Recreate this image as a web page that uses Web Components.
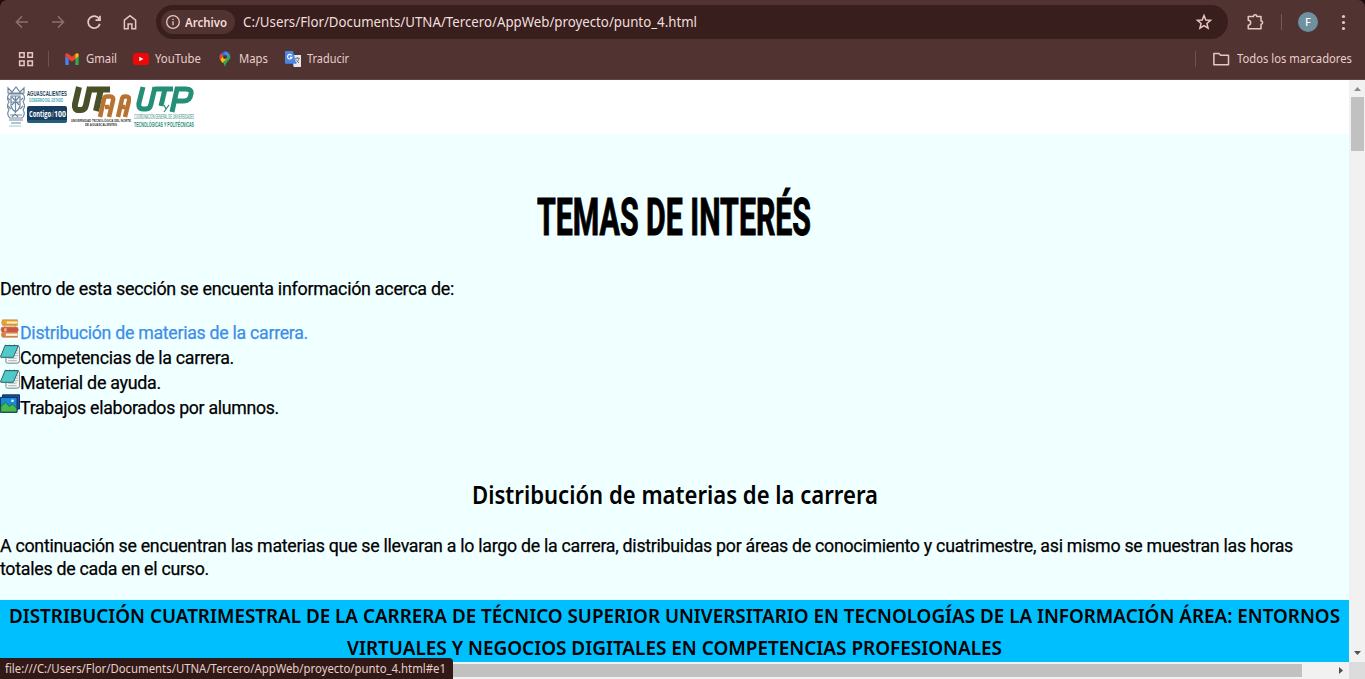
<!DOCTYPE html>
<html lang="es">
<head>
<meta charset="utf-8">
<title>Temas de interés</title>
<style>
html,body{margin:0;height:100%;overflow:hidden;font-family:"Noto Sans","Open Sans",sans-serif}
</style>
</head>
<body>
<browser-window></browser-window>
<script>
const define = (name, html, ready) => customElements.define(name, class extends HTMLElement {
  connectedCallback() {
    if (this.shadowRoot) return;
    const t = document.createElement('template');
    t.innerHTML = html;
    this.attachShadow({mode: 'open'}).append(t.content.cloneNode(true));
    if (ready) ready(this, this.shadowRoot);
  }
});

/* A single line of text condensed or widened to the width in its "w" attribute. */
define('fit-line', `<style>
:host{display:block;white-space:nowrap;flex:none}
span{display:inline-block;vertical-align:top;transform-origin:0 50%}
</style><span><slot></slot></span>`, (el, root) => {
  const w = +el.getAttribute('w'), s = root.querySelector('span');
  el.style.width = w + 'px';
  s.style.transform = 'scaleX(' + w / s.getBoundingClientRect().width + ')';
});

const icons = {
  back: '<path d="M20 12H4.500M12 4.500L4.500 12l7.500 7.500" stroke="#8f6e6b"/>',
  forward: '<path d="M4 12h15.500M12 4.500l7.500 7.500-7.500 7.500" stroke="#8f6e6b"/>',
  reload: '<path d="M19 8a8 8 0 1 0 .8 6.500M20 3.500v6h-6" stroke-width="2.300"/>',
  home: '<path d="M4.500 21V9.500L12 3.500l7.500 6V21h-5v-6.500h-5V21z"/>',
  info: '<circle cx="12" cy="12" r="9.500"/><path d="M12 11v6M12 7v2"/>',
  star: '<path d="M12 3.400l2.400 5.900 6.300.5-4.800 4.100 1.500 6.200-5.400-3.400-5.400 3.400 1.500-6.200L3.300 9.800l6.300-.5z"/>',
  puzzle: '<path d="M3 4.500h7a2.200 2.200 0 0 1 4.400 0h5.600v6a2.200 2.200 0 0 1 0 4.400v6.100H3v-4.800a3.200 3.200 0 0 0 0-6.400z" stroke-linejoin="round"/>',
  more: '<g fill="#e8c7c3" stroke="none"><circle cx="12" cy="3.500" r="2.200"/><circle cx="12" cy="12" r="2.200"/><circle cx="12" cy="20.500" r="2.200"/></g>',
  apps: '<path d="M3.500 3.500h6v6h-6zM14.500 3.500h6v6h-6zM3.500 14.500h6v6h-6zM14.500 14.500h6v6h-6z"/>',
  folder: '<path d="M2.500 4.500h6.500l2.500 2.500h10.500V19.500h-19.500z" stroke-linejoin="round"/>',
  gmail: '<g stroke="none"><path fill="#4285f4" d="M2 8l5 4v9H3a1 1 0 0 1-1-1z"/><path fill="#34a853" d="M17 12l5-4v12a1 1 0 0 1-1 1h-4z"/><path fill="#ea4335" d="M2 6c0-3 3-3 5-1.500l5 4 5-4v7.500l-5 4-5-4-5-4z"/><path fill="#fbbc04" d="M17 4.500C19 3 22 3 22 6v2l-5 4z"/></g>',
  youtube: '<rect x="0" y="3" width="24" height="18" rx="5" fill="#f00808" stroke="none"/><path d="M9.500 8.500v7l6-3.500z" fill="#fff" stroke="none"/>',
  maps: '<g stroke="none"><path fill="#34a853" d="M4 9c0 5 6 6 8 15 2-9 8-10 8-15a8 8 0 0 0-2-5z"/><path fill="#4285f4" d="M9 1.500a8 8 0 0 1 10 4L12 13z"/><path fill="#1a73e8" d="M6 4a8 8 0 0 1 6-3l-2 8z"/><path fill="#ea4335" d="M6 3.500l4.500 4L5 13a8 8 0 0 1 1-9.500z"/><path fill="#fbbc04" d="M5 13l6-7 4 5-7 7z"/><circle cx="12" cy="9" r="3" fill="#4d3431"/></g>',
  translate: '<g stroke="none"><path fill="#e6e8ec" d="M10 6h14v18H13z"/><path fill="#4a86e8" d="M1 0h11l5 19H1a1 1 0 0 1-1-1V1a1 1 0 0 1 1-1z"/></g><path d="M10 6.500a3.400 3.400 0 1 0 .5 3H7.500" stroke="#fff" stroke-width="1.700"/><path d="M15 11h7M18.500 9v2M21 11c-1 4-3 6-5 7M16.500 13l4.500 5" stroke="#69707d" stroke-width="1.300"/>',
  books: '<g stroke="#b0683c" stroke-width=".6"><path fill="#e8a72c" d="M3 1h18v6.500H3q-2-3 0-6.500z"/><path fill="#fff0c8" stroke="none" d="M8 3h13v2.500H8z"/><path fill="#f6dfa8" d="M5 7.500h14v2.500H5z"/><path fill="#cf5440" d="M2 10h19q2 3 0 5.500H2q-2-3 0-5.500z"/><path fill="#f0b48c" stroke="none" d="M5 11h3v4H5z"/><path fill="#d9853f" d="M3 16h18v6H3q-3-3 0-6z"/><path fill="#fff4df" stroke="none" d="M7 17.500h14v2.700H7z"/></g>',
  notebook: '<path fill="#f3f7f7" stroke="#606d72" stroke-width="1" d="M8 2h12.500q3 0 3 3v15q0 3-3 3H9q-2 0-2-2z"/><path d="M10 17h10M10 20h10M20 8h2M19 11h3M18 14h4" stroke="#9ca7ab" stroke-width="1"/><path fill="#4fcac8" stroke="#26555a" stroke-width="1.100" d="M6 2h16l-6 14H1q-1-1 1-4z"/><path d="M6 2q1-2 2 0M11 2q1-2 2 0M16 2q1-2 2 0" stroke="#26555a" stroke-width=".8"/>',
  gallery: '<path d="M3 1h20.500v17H3z" fill="#1451a8" stroke="#102b55" stroke-width="1.200"/><path d="M.5 4h20v18H.5z" fill="#178bd5" stroke="#102b55" stroke-width="1.200"/><path d="M1 15l5.500-5 5 5 3.500-3 5 5v4.500H1z" fill="#49b84d" stroke="#17603d" stroke-width=".9"/><circle cx="15" cy="8" r="1.500" fill="#fff" stroke="none"/>'
};
define('ui-icon', `<style>:host{display:block;flex:none}svg{display:block}</style>
<svg viewBox="0 0 24 24" fill="none" stroke="#e8c7c3" stroke-width="2"></svg>`, (el, root) => {
  const svg = root.querySelector('svg'), s = el.getAttribute('size') || 18;
  svg.setAttribute('width', s); svg.setAttribute('height', s);
  svg.innerHTML = icons[el.getAttribute('name')];
});

define('address-row', `<style>
:host{display:flex;height:44px;align-items:center;color:#f3dedb;box-sizing:border-box;padding:0 12px 0 13px}
.nav{display:flex;gap:18px;width:143px}
.bar{display:flex;align-items:center;width:1072px;height:34px;border-radius:17px;background:#381e1c;box-sizing:border-box;padding:0 15px 0 5px}
.chip{display:flex;align-items:center;gap:4px;width:74px;height:24px;border-radius:12px;background:#513331;padding-left:4px;box-sizing:border-box;font-size:12px;font-weight:600}
.url{font-size:14px;line-height:20px;margin:-1px 0 0 8px;flex:1;color:#f1dfdd}
.sep{width:1px;height:16px;background:#795956;margin:0 16px 0 17px}
.avatar{width:20px;height:20px;border-radius:50%;background:#6f909f;font:500 11px/20px "Noto Sans",sans-serif;text-align:center;color:#fff}
</style>
<div class="nav"><ui-icon name="back"></ui-icon><ui-icon name="forward"></ui-icon><ui-icon name="reload"></ui-icon><ui-icon name="home"></ui-icon></div>
<div class="bar"><div class="chip"><ui-icon name="info" size="16"></ui-icon><fit-line w="42">Archivo</fit-line></div>
<div class="url"><fit-line w="454">C:/Users/Flor/Documents/UTNA/Tercero/AppWeb/proyecto/punto_4.html</fit-line></div><ui-icon name="star"></ui-icon></div>
<ui-icon name="puzzle" style="margin-left:18px"></ui-icon><div class="sep"></div><div class="avatar">F</div><ui-icon name="more" size="17" style="margin-left:17px"></ui-icon>`);

define('bookmarks-row', `<style>
:host{display:flex;height:36px;align-items:center;box-sizing:border-box;padding:0 13px 7px 17px;font-size:12.500px;color:#e8cfcc}
.sep{width:1px;height:16px;background:#74514e}
fit-line{margin-left:6px;margin-top:-1px}
</style>
<ui-icon name="apps"></ui-icon><div class="sep" style="margin:0 15px 0 13px"></div>
<ui-icon name="gmail" size="16"></ui-icon><fit-line w="31">Gmail</fit-line>
<ui-icon name="youtube" size="16" style="margin-left:16px"></ui-icon><fit-line w="46">YouTube</fit-line>
<ui-icon name="maps" size="16" style="margin-left:16px"></ui-icon><fit-line w="29">Maps</fit-line>
<ui-icon name="translate" size="16" style="margin-left:17px"></ui-icon><fit-line w="42">Traducir</fit-line>
<div class="sep" style="margin-left:auto"></div><ui-icon name="folder" style="margin-left:16px"></ui-icon><fit-line w="115" style="margin-left:7px">Todos los marcadores</fit-line>`);

define('institution-logos', `<style>
:host{display:flex;height:54px;background:#fff;box-sizing:border-box;padding:5px 0 0 6px;font-family:"Liberation Sans",sans-serif;font-weight:700}
svg{display:block;flex:none}
.gov{width:40px;margin:5px 4px 0 1px}
.name{font-size:7.500px;line-height:8px;color:#263d56}
.sub{font-size:4.500px;line-height:6px;color:#35a7ae;margin-left:2px}
.contigo{display:flex;height:17px;margin-top:2px;box-sizing:border-box;padding-left:2px;border-radius:2px;border-bottom:3px solid #245e7b;background:#173e60;color:#fff;font:700 8.500px/15px "Open Sans",sans-serif}
.logo{width:60px;margin-right:3px;color:#333}
.cap{font-size:4px;line-height:4px}
.utp{font-size:6.500px;line-height:8px;color:#278c75}
</style>
<svg width="20" height="44"><g fill="none" stroke="#7089a0" stroke-width="1.200"><path d="M2 3l4 4 4-5 4 5 4-4v5H2zM3 9q-3 4 0 8-3 4 0 8-3 4 1 8h12q4-4 1-8 3-4 0-8 3-4 0-8z"/><path d="M5 11h9v10q-1 4-4.500 6Q6 25 5 21zM9.500 11v17M5 17h9M4 30h12M3 35h14M5 38h10M6 12l7 8M13 12l-7 8M2 13l2 2M17 13l-2 2M2 21l3 3M17 21l-3 3M6 32l3-3 3 3"/></g><path d="M3 41h12" stroke="#8bd1d9"/></svg>
<div class="gov"><fit-line class="name" w="40">AGUASCALIENTES</fit-line><fit-line class="sub" w="34">GOBIERNO DEL ESTADO</fit-line>
<div class="contigo"><fit-line w="22">Contigo</fit-line><fit-line w="3" style="color:#8a8a86">al</fit-line><fit-line w="12">100</fit-line></div></div>
<div class="logo"><svg width="60" height="34"><g fill="none" stroke-width="6"><path d="M8 2L4 19q-1 6 4 6h2q4 0 5-5l4-18M18 4.500h21M30 4l-5 22" stroke="#48502a"/><path d="M29 32l4-18q.500-2.500 3-2.500h3q4 0 3 4l-4 16.500M34 22h4M47 32l4-18q.500-2.500 3-2.500h1q4 0 3 4l-4 16.500M50 22h4" stroke="#b87333" stroke-width="4.500"/></g></svg>
<fit-line class="cap" w="60">UNIVERSIDAD TECNOLÓGICA DEL NORTE</fit-line><fit-line class="cap" w="32" style="margin-left:14px">DE AGUASCALIENTES</fit-line></div>
<div class="logo"><svg width="60" height="28"><g fill="none" stroke="#258e76" stroke-width="5"><path d="M9 2L5 18q-1 6 4 6h3q4 0 5-5l4-17M21 4h18M31 4l-4 17M38 27l5-23h9q6 0 5 5-1 7-7 7h-8"/><path d="M30 20l2 4 3-4-5 7" stroke-width="1.200"/></g></svg>
<fit-line w="60" class="utp" style="font-weight:400">COORDINACIÓN GENERAL DE UNIVERSIDADES</fit-line><fit-line w="60" class="utp">TECNOLÓGICAS Y POLITÉCNICAS</fit-line></div>`);

define('topic-item', `<style>:host{display:flex;height:25px;align-items:flex-start;line-height:25px}ui-icon{margin-top:-1px}</style>
<ui-icon size="20"></ui-icon><slot></slot>`, (el, root) => {
  const old = root.querySelector('ui-icon'), i = document.createElement('ui-icon');
  i.setAttribute('name', el.getAttribute('icon')); i.setAttribute('size', 20);
  old.replaceWith(i);
});

define('topics-page', `<style>
:host{display:block;width:1349px;height:582px;overflow:hidden;background:#f0ffff;color:#000;font:19px/23px Roboto,sans-serif;letter-spacing:-.3px;-webkit-text-stroke:.25px}
institution-logos{letter-spacing:0;-webkit-text-stroke:0}
main{display:flex;flex-direction:column}
h1,h2,p{margin:0;font-weight:inherit;font-size:inherit;letter-spacing:0}
p{letter-spacing:-.3px}
h1{padding:51px 0 0 537px;font-weight:700;font-size:51px;line-height:66px;-webkit-text-stroke:1px}
.intro{margin-top:26px}
.list{margin-top:20px}
h2{padding:58px 0 0 472px;font:600 25px/32px "Noto Sans",sans-serif;-webkit-text-stroke:0}
.text{margin-top:24px}
.band{display:flex;flex-direction:column;align-items:center;height:62px;margin-top:20px;background:#00bfff;font:600 20px/32px "Noto Sans",sans-serif;letter-spacing:0;-webkit-text-stroke:0}
</style>
<institution-logos></institution-logos>
<main>
<h1><fit-line w="274">TEMAS DE INTERÉS</fit-line></h1>
<p class="intro"><fit-line w="454">Dentro de esta sección se encuenta información acerca de:</fit-line></p>
<div class="list">
<topic-item icon="books" style="color:#3b8ee8"><fit-line w="288">Distribución de materias de la carrera.</fit-line></topic-item>
<topic-item icon="notebook"><fit-line w="214">Competencias de la carrera.</fit-line></topic-item>
<topic-item icon="notebook"><fit-line w="141">Material de ayuda.</fit-line></topic-item>
<topic-item icon="gallery"><fit-line w="259">Trabajos elaborados por alumnos.</fit-line></topic-item>
</div>
<h2><fit-line w="406">Distribución de materias de la carrera</fit-line></h2>
<p class="text"><fit-line w="1293">A continuación se encuentran las materias que se llevaran a lo largo de la carrera, distribuidas por áreas de conocimiento y cuatrimestre, asi mismo se muestran las horas</fit-line><fit-line w="209">totales de cada en el curso.</fit-line></p>
<div class="band"><fit-line w="1331">DISTRIBUCIÓN CUATRIMESTRAL DE LA CARRERA DE TÉCNICO SUPERIOR UNIVERSITARIO EN TECNOLOGÍAS DE LA INFORMACIÓN ÁREA: ENTORNOS</fit-line><fit-line w="655">VIRTUALES Y NEGOCIOS DIGITALES EN COMPETENCIAS PROFESIONALES</fit-line></div>
</main>`);

define('v-scroll', `<style>:host{display:flex;flex-direction:column;align-items:center;width:16px;height:582px;background:#f1f1f1}
.t{width:13px;height:54px;background:#c1c1c1;margin:0 0 auto 1px}svg{display:block;flex:none}</style>
<svg width="16" height="17"><path d="M5 11h7L8.500 7z" fill="#8a8a8a"/></svg><div class="t"></div><svg width="16" height="17"><path d="M5 6h7l-3.500 4z" fill="#505050"/></svg>`);
define('h-scroll', `<style>:host{display:flex;align-items:center;width:1349px;height:17px;background:#f1f1f1}.t{width:1302px;height:13px;background:#c1c1c1}svg{margin-left:auto}</style>
<div class="t"></div><svg width="17" height="17"><path d="M7 5v7l4-3.500z" fill="#505050"/></svg>`);
define('status-bubble', `<style>:host{display:block;position:absolute;left:0;bottom:0;width:453px;height:21px;box-sizing:border-box;padding-left:5px;background:#301917;color:#e9cdc9;border-radius:0 4px 0 0;font-size:12px;line-height:21px}</style>
<fit-line w="441">file:///C:/Users/Flor/Documents/UTNA/Tercero/AppWeb/proyecto/punto_4.html#e1</fit-line>`);

define('browser-window', `<style>
:host{display:block;position:relative;width:1365px;height:679px;overflow:hidden;background:#1d0f0e}
header{height:80px;background:#513331;border-radius:7px 7px 0 0;box-sizing:border-box;border-bottom:1px solid #5e4644}
.view{display:grid;grid-template-columns:1349px 16px;grid-template-rows:582px 17px;background:#dcdcdc}
</style>
<header><address-row></address-row><bookmarks-row></bookmarks-row></header>
<div class="view"><topics-page></topics-page><v-scroll></v-scroll><h-scroll></h-scroll></div>
<status-bubble></status-bubble>`);
</script>
</body>
</html>
